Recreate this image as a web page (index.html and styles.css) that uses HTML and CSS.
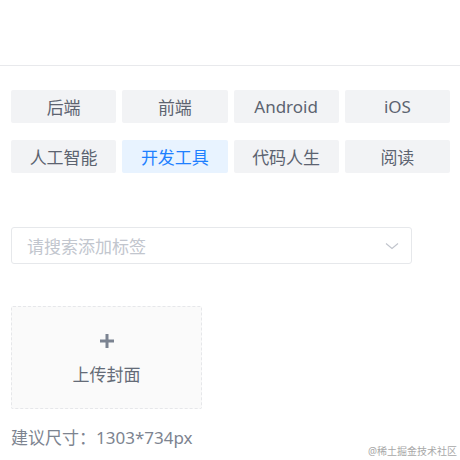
FILE: index.html
```html
<!DOCTYPE html>
<html lang="zh-CN">
<head>
<meta charset="utf-8">
<link rel="stylesheet" href="styles.css">
</head>
<body>
<div class="page">
  <div class="header"></div>
  <div class="tags">
    <div class="tag">后端</div>
    <div class="tag">前端</div>
    <div class="tag">Android</div>
    <div class="tag">iOS</div>
    <div class="tag">人工智能</div>
    <div class="tag active">开发工具</div>
    <div class="tag">代码人生</div>
    <div class="tag">阅读</div>
  </div>
  <div class="select">
    <span class="placeholder">请搜索添加标签</span>
    <svg class="chevron" width="14" height="8" viewBox="0 0 14 8"><path d="M1 1.5 L7 6.5 L13 1.5" fill="none" stroke="#c0c4cc" stroke-width="1.1"/></svg>
  </div>
  <div class="upload">
    <svg class="plus" width="16" height="16" viewBox="0 0 16 16"><path d="M8 1 V15 M1 8 H15" stroke="#7b8391" stroke-width="3"/></svg>
    <div class="upload-text">上传封面</div>
  </div>
  <div class="hint">建议尺寸：1303*734px</div>
  <div class="watermark">@稀土掘金技术社区</div>
</div>
</body>
</html>
```
FILE: styles.css
```css
html, body {
  margin: 0;
  padding: 0;
  background: #fff;
}
body {
  font-family: "Noto Sans", "Noto Sans CJK SC", sans-serif;
}
.page {
  position: relative;
  width: 460px;
  height: 460px;
  overflow: hidden;
}
.header {
  height: 65px;
  border-bottom: 1px solid #e8e9ec;
}
.tags {
  display: grid;
  grid-template-columns: repeat(4, 1fr);
  column-gap: 6px;
  row-gap: 17px;
  padding: 0 10px 0 11px;
  margin-top: 24px;
}
.tag {
  height: 33px;
  display: flex;
  align-items: center;
  justify-content: center;
  background: #f2f3f5;
  border-radius: 2px;
  color: #5c6370;
  font-size: 17px;
}
.tag.active {
  background: #e8f3ff;
  color: #1e80ff;
}
.select {
  box-sizing: border-box;
  width: 401px;
  height: 37px;
  margin: 54px 0 0 11px;
  border: 1px solid #e6e8eb;
  border-radius: 3px;
  display: flex;
  align-items: center;
  justify-content: space-between;
  padding: 0 12px 0 15px;
}
.placeholder {
  color: #c2c6ce;
  font-size: 17px;
}
.chevron {
  display: block;
}
.upload {
  box-sizing: border-box;
  width: 191px;
  height: 103px;
  margin: 42px 0 0 11px;
  border: 1px dashed #e6e7ea;
  border-radius: 2px;
  background: #fafafa;
  display: flex;
  flex-direction: column;
  align-items: center;
  padding-top: 26px;
}
.plus {
  display: block;
}
.upload-text {
  margin-top: 14px;
  color: #646b77;
  font-size: 17px;
  line-height: 24px;
}
.hint {
  margin: 17px 0 0 11px;
  color: #7d8490;
  font-size: 17px;
  line-height: 24px;
}
.watermark {
  position: absolute;
  right: 3px;
  bottom: 2px;
  font-size: 10px;
  color: #a8a8a8;
  line-height: 14px;
}
```
